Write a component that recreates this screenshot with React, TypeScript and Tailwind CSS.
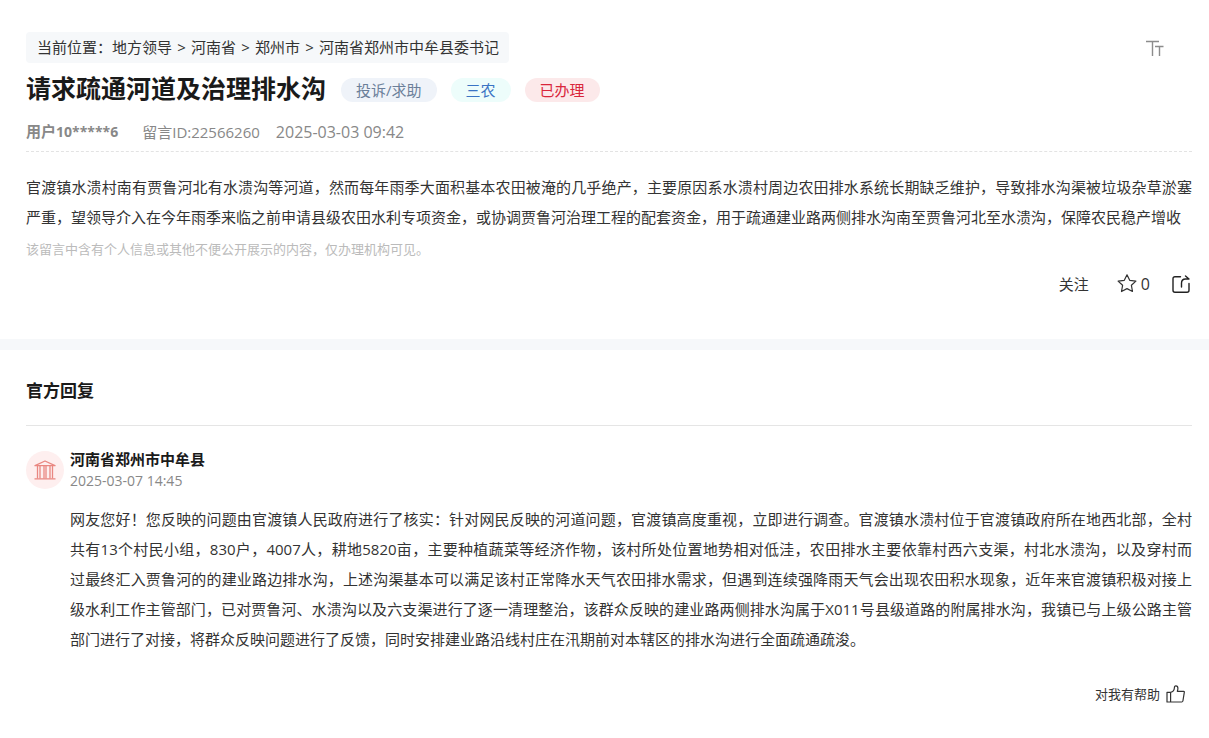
const CRUMBS = ["地方领导", "河南省", "郑州市", "河南省郑州市中牟县委书记"]

const TAGS = [
  { label: "投诉/求助", className: "bg-[#eff3f9] text-[#6b7f99]" },
  { label: "三农", className: "bg-[#edfdfb] text-[#3a74c4]" },
  { label: "已办理", className: "bg-[#fce9ea] text-[#d9263b]" },
]

const MESSAGE =
  "官渡镇水溃村南有贾鲁河北有水溃沟等河道，然而每年雨季大面积基本农田被淹的几乎绝产，主要原因系水溃村周边农田排水系统长期缺乏维护，导致排水沟渠被垃圾杂草淤塞严重，望领导介入在今年雨季来临之前申请县级农田水利专项资金，或协调贾鲁河治理工程的配套资金，用于疏通建业路两侧排水沟南至贾鲁河北至水溃沟，保障农民稳产增收"

// \u2060 keeps 过最终 on one line
const REPLY =
  "网友您好！您反映的问题由官渡镇人民政府进行了核实：针对网民反映的河道问题，官渡镇高度重视，立即进行调查。官渡镇水溃村位于官渡镇政府所在地西北部，全村共有13个村民小组，830户，4007人，耕地5820亩，主要种植蔬菜等经济作物，该村所处位置地势相对低洼，农田排水主要依靠村西六支渠，村北水溃沟，以及穿村而过\u2060最终汇入贾鲁河的的建业路边排水沟，上述沟渠基本可以满足该村正常降水天气农田排水需求，但遇到连续强降雨天气会出现农田积水现象，近年来官渡镇积极对接上级水利工作主管部门，已对贾鲁河、水溃沟以及六支渠进行了逐一清理整治，该群众反映的建业路两侧排水沟属于X011号县级道路的附属排水沟，我镇已与上级公路主管部门进行了对接，将群众反映问题进行了反馈，同时安排建业路沿线村庄在汛期前对本辖区的排水沟进行全面疏通疏浚。"

// ─── Icons ────────────────────────────────────────────────────────────────────

function TextSizeIcon() {
  return (
    <svg width="18" height="16" viewBox="0 0 18 16" fill="none" stroke="#8c8c8c" strokeWidth="1.4">
      <path d="M0 1.5h13M6.5 1.5V16M9 6.5h8.5M13.5 6.5V16" />
    </svg>
  )
}

function StarIcon() {
  return (
    <svg width="20" height="20" viewBox="0 0 20 20" fill="none" stroke="#333" strokeWidth="1.2" strokeLinejoin="round">
      <path d="M10 .8l2.7 5.5 6.2.8-4.5 4.2 1.1 6.2L10 14.6l-5.5 2.9 1.1-6.2L1.1 7.1l6.2-.8z" />
    </svg>
  )
}

function ShareIcon() {
  return (
    <svg width="18" height="18" viewBox="0 0 18 18" fill="none" stroke="#222" strokeWidth="1.4" strokeLinecap="round" strokeLinejoin="round">
      <path d="M8.5 1.8H3Q1 1.8 1 3.8v11.4q0 2 2 2h12q2 0 2-2V8.5" />
      <path d="M9.5 12V8.2q0-4.2 4-4.2h3.5L13.5 1" />
    </svg>
  )
}

function HallIcon() {
  return (
    <svg width="22" height="20" viewBox="0 0 22 20" fill="none" stroke="#e98781" strokeWidth="1.3" strokeLinejoin="round">
      <path d="M1 5.7L11 1l10 4.7zM.5 18.8h21" />
      <path d="M3.5 6v12.5M6 6v12.5M10 6v12.5M12 6v12.5M16 6v12.5M18.5 6v12.5" />
    </svg>
  )
}

function ThumbIcon() {
  return (
    <svg width="20" height="19" viewBox="0 0 20 19" fill="none" stroke="#333" strokeWidth="1.2" strokeLinejoin="round">
      <path d="M1 7.3h3.6v9.7H1zM4.6 7.3q3.6-.6 3.8-4.5 0-2 1.5-2 2 0 2 2.4 0 1.6-.6 3.1h6.4q.8 0 .6 1l-1.4 8.7q-.2 1-1.2 1H4.6z" />
    </svg>
  )
}

// ─── Page ─────────────────────────────────────────────────────────────────────

export default function App() {
  return (
    <main
      lang="zh-CN"
      className="bg-white pt-8 pb-8 font-['Open_Sans','Noto_Sans_CJK_SC',sans-serif] text-[15px] text-[#333]"
    >
      <article className="pr-[17px] pl-[26px]">
        <div className="flex items-center justify-between">
          <nav className="flex h-[31px] items-center rounded-sm bg-[#f6f8fa] pr-[10px] pl-[11px]">
            <span>当前位置：</span>
            <ol className="flex items-center">
              {CRUMBS.map((crumb, i) => (
                <li key={crumb} className="flex items-center">
                  {i > 0 && <span className="w-[19px] text-center">&gt;</span>}
                  <a href="#">{crumb}</a>
                </li>
              ))}
            </ol>
          </nav>
          <button type="button" aria-label="字体大小" className="mr-7">
            <TextSizeIcon />
          </button>
        </div>

        <div className="mt-[7px] flex items-center gap-[15px]">
          <h1 className="text-[25px] leading-9 font-bold text-[#1a1a1a]">请求疏通河道及治理排水沟</h1>
          <div className="flex gap-[14px] pt-1">
            {TAGS.map((tag) => (
              <span key={tag.label} className={`rounded-full px-[15px] leading-6 ${tag.className}`}>
                {tag.label}
              </span>
            ))}
          </div>
        </div>

        <div className="mt-[13px] flex items-center border-b border-dashed border-[#e3e3e3] pb-[7px] leading-6 text-[#888]">
          <span className="mr-6 font-bold">
            用户<span className="text-[14px]">10*****6</span>
          </span>
          <span className="mr-4">留言ID:22566260</span>
          <time className="text-[16px]">2025-03-03 09:42</time>
        </div>

        <p className="mt-5 text-justify leading-[30px]">{MESSAGE}</p>
        <p className="mt-1 text-[13px] leading-[26px] text-[#bbb]">
          该留言中含有个人信息或其他不便公开展示的内容，仅办理机构可见。
        </p>

        <div className="mt-2 flex h-7 items-center justify-end pr-[2px]">
          <button type="button" className="mr-7">关注</button>
          <button type="button" className="mr-[22px] flex items-center gap-1">
            <StarIcon />
            <span className="text-[16px]">0</span>
          </button>
          <button type="button" aria-label="分享">
            <ShareIcon />
          </button>
        </div>
      </article>

      <div className="mt-[41px] h-[11px] bg-[#f6f8fa]" />

      <section className="pr-[17px] pl-[26px]">
        <h2 className="border-b border-[#e5e5e5] pt-[29px] pb-[22px] text-[17px] leading-6 font-bold text-[#1a1a1a]">官方回复</h2>

        <div className="mt-[22px] flex items-center gap-[6px]">
          <div className="flex size-[38px] items-center justify-center rounded-full bg-[#feefef]">
            <HallIcon />
          </div>
          <div>
            <h3 className="leading-[22px] font-bold text-[#1a1a1a]">河南省郑州市中牟县</h3>
            <time className="block text-[14px] leading-[22px] text-[#888]">2025-03-07 14:45</time>
          </div>
        </div>

        <p className="mt-3 ml-11 text-justify leading-[30px]">{REPLY}</p>

        <div className="mt-[31px] flex justify-end pr-[6px]">
          <button type="button" className="flex items-center gap-[6px] text-[13px]">
            <span>对我有帮助</span>
            <ThumbIcon />
          </button>
        </div>
      </section>
    </main>
  )
}
